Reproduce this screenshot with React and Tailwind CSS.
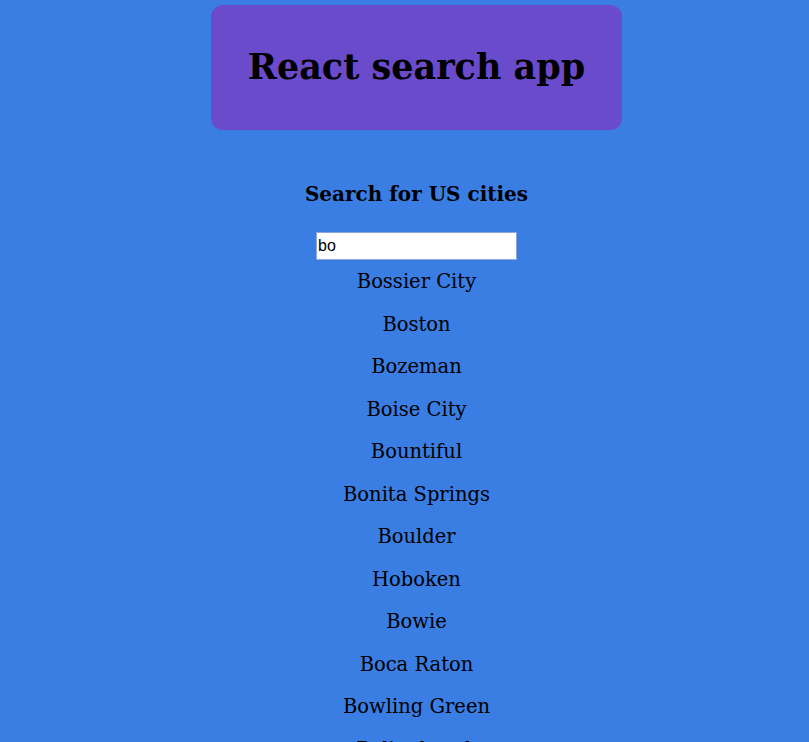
import React, { useState } from "react";

const CITIES = [
  "Bossier City",
  "Boston",
  "Bozeman",
  "Boise City",
  "Bountiful",
  "Bonita Springs",
  "Boulder",
  "Hoboken",
  "Bowie",
  "Boca Raton",
  "Bowling Green",
  "Bolingbrook",
];

const App = () => {
  const [query, setQuery] = useState("bo");

  return (
    <div
      className="min-h-screen bg-[#3a7de3] pl-[24px] text-black"
      style={{ fontFamily: '"DejaVu Serif", "Liberation Serif", serif' }}
    >
      <div className="flex flex-col items-center pt-[5px]">
        <div className="flex h-[125px] w-[411px] items-center justify-center rounded-[12px] bg-[#6a4bcc]">
          <h1 className="text-[35px] font-bold">React search app</h1>
        </div>

        <h2 className="mt-[48px] text-[20px] font-bold leading-[32px]">Search for US cities</h2>

        <input
          value={query}
          onChange={(e) => setQuery(e.target.value)}
          className="mt-[22px] h-[28px] w-[201px] border border-[#8aa8dc] bg-white px-[1px] text-[16px] outline-none"
          style={{ fontFamily: '"Liberation Sans", Arial, sans-serif' }}
        />

        <ul className="mt-[1px] flex flex-col items-center">
          {CITIES.map((city) => (
            <li key={city} className="text-[19.5px] leading-[42.5px]">
              {city}
            </li>
          ))}
        </ul>
      </div>
    </div>
  );
};

export default App;
